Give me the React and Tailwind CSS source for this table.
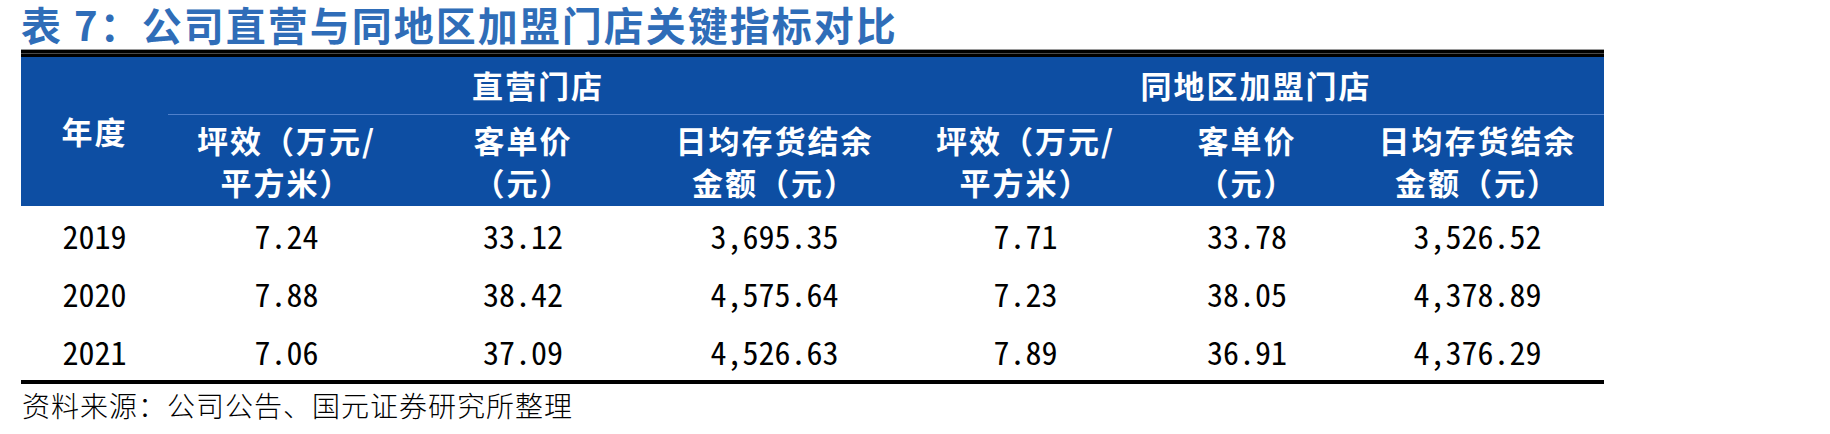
import React from 'react'

const cjk = { fontFamily: '"Noto Sans CJK SC", "Noto Sans", sans-serif' }
const num = { fontFamily: '"Noto Sans Mono CJK SC", "Liberation Mono", monospace' }

const rows = [
  ['2019', '7.24', '33.12', '3,695.35', '7.71', '33.78', '3,526.52'],
  ['2020', '7.88', '38.42', '4,575.64', '7.23', '38.05', '4,378.89'],
  ['2021', '7.06', '37.09', '4,526.63', '7.89', '36.91', '4,376.29'],
]

const subHeads = [
  ['坪效（万元/', '平方米）'],
  ['客单价', '（元）'],
  ['日均存货结余', '金额（元）'],
]

const App = () => {
  return (
    <div className="w-[1830px] h-[434px] bg-white overflow-hidden" style={cjk}>
      <div className="h-[49px] pt-[1px] pl-[21px] text-[40px] leading-[46px] font-bold text-[#2f6db8] tracking-[2px] whitespace-nowrap">
        表 7：公司直营与同地区加盟门店关键指标对比
      </div>

      <div className="ml-[21px] w-[1583px]">
        {/* top double rule */}
        <div className="h-[1px] bg-[#9a9a9a]"></div>
        <div className="h-[3px] bg-black"></div>
        <div className="h-[1px] bg-[#4a4a4a]"></div>
        <div className="h-[3px] bg-black"></div>

        <div className="grid grid-cols-[147px_237px_236px_267px_235px_208px_253px] grid-rows-[58px_91px] bg-[#0d4ea3] text-white font-bold text-[31px] tracking-[2px]">
          <div className="row-span-2 flex items-center justify-center">年度</div>
          <div className="col-span-3 flex items-center justify-center border-b border-[#4f80cb]">直营门店</div>
          <div className="col-span-3 flex items-center justify-center border-b border-[#4f80cb]">同地区加盟门店</div>
          {[...subHeads, ...subHeads].map((h, i) => (
            <div key={i} className="flex flex-col items-center justify-center leading-[42px] whitespace-nowrap">
              <span>{h[0]}</span>
              <span>{h[1]}</span>
            </div>
          ))}
        </div>

        <div>
          {rows.map((r, i) => (
            <div key={i} className="grid grid-cols-[147px_237px_236px_267px_235px_208px_253px] h-[58px] text-black text-[32px]" style={num}>
              {r.map((c, j) => (
                <div key={j} className="flex items-center justify-center">{c}</div>
              ))}
            </div>
          ))}
        </div>

        <div className="h-[4px] bg-black"></div>
      </div>

      <div className="pl-[22px] text-[28px] leading-[42px] tracking-[1px] text-black font-light">
        资料来源：公司公告、国元证券研究所整理
      </div>
    </div>
  )
}

export default App
